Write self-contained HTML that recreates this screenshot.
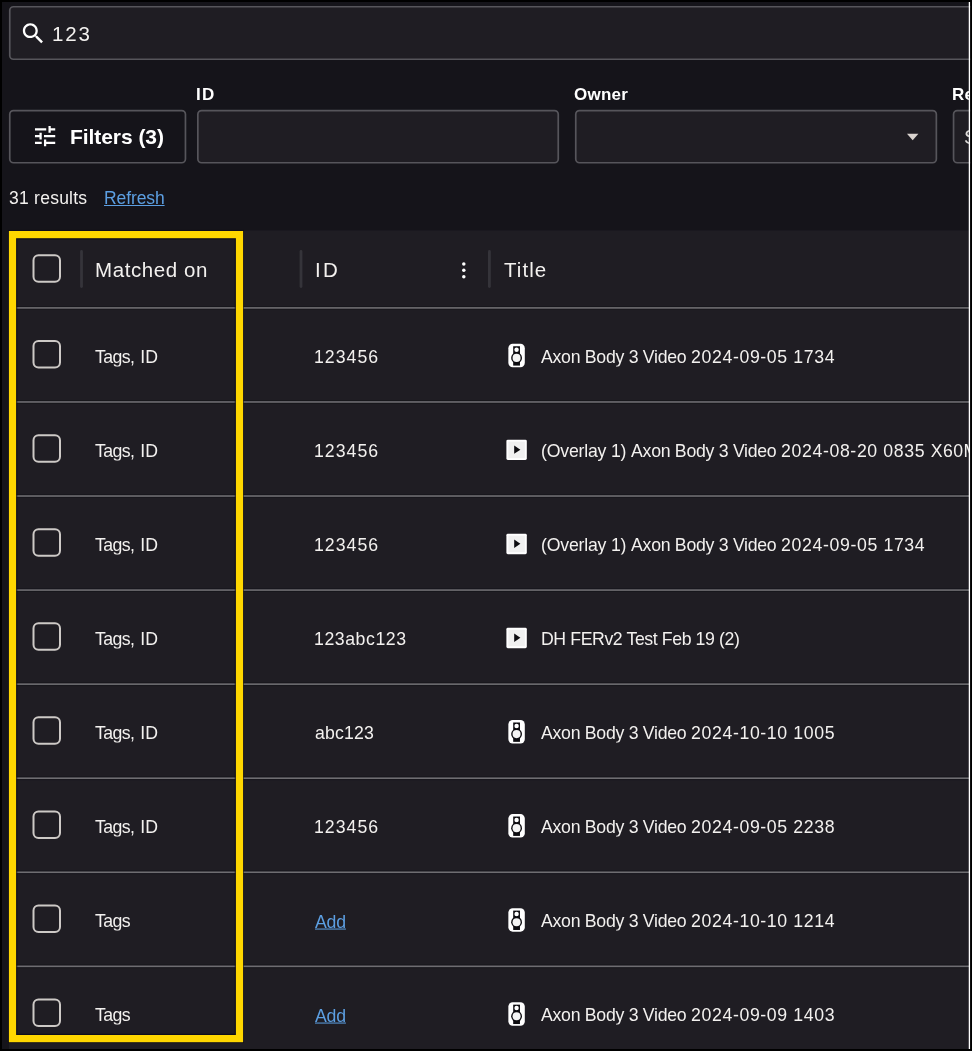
<!DOCTYPE html>
<html lang="en">
<head>
<meta charset="utf-8">
<title>Evidence search</title>
<style>
*{box-sizing:border-box;margin:0;padding:0}
html,body{width:972px;height:1051px;overflow:hidden;background:#000}
body{position:relative;font-family:"Liberation Sans",sans-serif;color:#f3f1ef}
#page{position:absolute;left:2px;top:2px;width:967px;height:1047px;background:#15141a}
#art{position:absolute;left:0;top:0}
#text{position:absolute;left:0;top:0;width:969px;height:1049px;overflow:hidden}
.t{position:absolute;white-space:nowrap;line-height:1;will-change:transform}
.c{transform:translateY(0.55px)}
a{color:#5c9fe2;text-decoration:underline;text-decoration-thickness:1.4px;text-underline-offset:1px}
</style>
</head>
<body>
<div id="page"></div>
<svg id="art" width="972" height="1051" viewBox="0 0 972 1051">
<rect x="9.75" y="6.75" width="999.40" height="52.50" rx="3.75" fill="#1f1d23" stroke="#56555b" stroke-width="1.7"/>
<path transform="translate(19.4 19.7) scale(1.15)" fill="#fff" d="M15.5 14h-.79l-.28-.27C15.41 12.59 16 11.11 16 9.5 16 5.91 13.09 3 9.5 3S3 5.91 3 9.5 5.91 16 9.5 16c1.61 0 3.09-.59 4.23-1.57l.27.28v.79l5 4.99L20.49 19l-4.99-5zm-6 0C7.01 14 5 11.99 5 9.5S7.01 5 9.5 5 14 7.01 14 9.5 11.99 14 9.5 14z"/>
<rect x="9.75" y="110.55" width="175.70" height="52.20" rx="3.75" fill="#15141a" stroke="#56555b" stroke-width="1.7"/>
<path transform="translate(31.6 122.6) scale(1.125)" fill="#fff" d="M3 17v2h6v-2H3zM3 5v2h10V5H3zm10 16v-2h8v-2h-8v-2h-2v6h2zM7 9v2H3v2h4v2h2V9H7zm14 4v-2H11v2h10zm-6-4h2V7h4V5h-4V3h-2v6z"/>
<rect x="197.85" y="110.55" width="360.40" height="52.20" rx="3.75" fill="#1f1d23" stroke="#56555b" stroke-width="1.7"/>
<rect x="575.75" y="110.55" width="360.60" height="52.20" rx="3.75" fill="#1f1d23" stroke="#56555b" stroke-width="1.7"/>
<path d="M907 133.8h11.4l-5.7 6.4z" fill="#d9d3cf"/>
<rect x="953.55" y="110.55" width="105.60" height="52.20" rx="3.75" fill="#1f1d23" stroke="#56555b" stroke-width="1.7"/>
<rect x="9" y="230.4" width="960" height="818.6" fill="#1f1d23"/>
<rect x="33.50" y="255.20" width="26.5" height="26.5" rx="5" fill="none" stroke="#cdc9c6" stroke-width="2"/>
<rect x="80.10" y="250" width="2.8" height="38" rx="1.4" fill="#35343a"/>
<rect x="299.60" y="250" width="2.8" height="38" rx="1.4" fill="#35343a"/>
<rect x="488.00" y="250" width="2.8" height="38" rx="1.4" fill="#35343a"/>
<circle cx="463.8" cy="263.9" r="1.75" fill="#fff"/>
<circle cx="463.8" cy="270.3" r="1.75" fill="#fff"/>
<circle cx="463.8" cy="276.7" r="1.75" fill="#fff"/>
<rect x="9" y="306.00" width="960" height="3.8" fill="#17161b" opacity="0.8"/>
<rect x="9" y="307.10" width="960" height="1.6" fill="#6e6d71"/>
<rect x="33.50" y="341.10" width="26.5" height="26.5" rx="5" fill="none" stroke="#cdc9c6" stroke-width="2"/>
<g transform="translate(508.35 343.80) scale(0.968 0.978)"><rect width="17" height="24" rx="4.5" fill="#fff"/><rect x="5" y="2.5" width="7" height="19.8" fill="#0d0c10"/><circle cx="8.5" cy="6" r="2.3" fill="#fff"/><circle cx="8.5" cy="14.4" r="5.6" fill="#0d0c10"/><circle cx="8.5" cy="14.4" r="4.15" fill="#f4f4f4"/></g>
<rect x="9" y="400.06" width="960" height="3.8" fill="#17161b" opacity="0.8"/>
<rect x="9" y="401.16" width="960" height="1.6" fill="#6e6d71"/>
<rect x="33.50" y="435.16" width="26.5" height="26.5" rx="5" fill="none" stroke="#cdc9c6" stroke-width="2"/>
<g transform="translate(506.40 439.66) scale(0.972)"><rect width="21" height="21" rx="1.5" fill="#fff"/><rect x="2" y="2" width="17" height="17" fill="#f0f0f0"/><path d="M8 6v8.6l6.4-4.3z" fill="#0d0c10"/></g>
<rect x="9" y="494.12" width="960" height="3.8" fill="#17161b" opacity="0.8"/>
<rect x="9" y="495.22" width="960" height="1.6" fill="#6e6d71"/>
<rect x="33.50" y="529.22" width="26.5" height="26.5" rx="5" fill="none" stroke="#cdc9c6" stroke-width="2"/>
<g transform="translate(506.40 533.72) scale(0.972)"><rect width="21" height="21" rx="1.5" fill="#fff"/><rect x="2" y="2" width="17" height="17" fill="#f0f0f0"/><path d="M8 6v8.6l6.4-4.3z" fill="#0d0c10"/></g>
<rect x="9" y="588.18" width="960" height="3.8" fill="#17161b" opacity="0.8"/>
<rect x="9" y="589.28" width="960" height="1.6" fill="#6e6d71"/>
<rect x="33.50" y="623.28" width="26.5" height="26.5" rx="5" fill="none" stroke="#cdc9c6" stroke-width="2"/>
<g transform="translate(506.40 627.78) scale(0.972)"><rect width="21" height="21" rx="1.5" fill="#fff"/><rect x="2" y="2" width="17" height="17" fill="#f0f0f0"/><path d="M8 6v8.6l6.4-4.3z" fill="#0d0c10"/></g>
<rect x="9" y="682.24" width="960" height="3.8" fill="#17161b" opacity="0.8"/>
<rect x="9" y="683.34" width="960" height="1.6" fill="#6e6d71"/>
<rect x="33.50" y="717.34" width="26.5" height="26.5" rx="5" fill="none" stroke="#cdc9c6" stroke-width="2"/>
<g transform="translate(508.35 720.04) scale(0.968 0.978)"><rect width="17" height="24" rx="4.5" fill="#fff"/><rect x="5" y="2.5" width="7" height="19.8" fill="#0d0c10"/><circle cx="8.5" cy="6" r="2.3" fill="#fff"/><circle cx="8.5" cy="14.4" r="5.6" fill="#0d0c10"/><circle cx="8.5" cy="14.4" r="4.15" fill="#f4f4f4"/></g>
<rect x="9" y="776.30" width="960" height="3.8" fill="#17161b" opacity="0.8"/>
<rect x="9" y="777.40" width="960" height="1.6" fill="#6e6d71"/>
<rect x="33.50" y="811.40" width="26.5" height="26.5" rx="5" fill="none" stroke="#cdc9c6" stroke-width="2"/>
<g transform="translate(508.35 814.10) scale(0.968 0.978)"><rect width="17" height="24" rx="4.5" fill="#fff"/><rect x="5" y="2.5" width="7" height="19.8" fill="#0d0c10"/><circle cx="8.5" cy="6" r="2.3" fill="#fff"/><circle cx="8.5" cy="14.4" r="5.6" fill="#0d0c10"/><circle cx="8.5" cy="14.4" r="4.15" fill="#f4f4f4"/></g>
<rect x="9" y="870.36" width="960" height="3.8" fill="#17161b" opacity="0.8"/>
<rect x="9" y="871.46" width="960" height="1.6" fill="#6e6d71"/>
<rect x="33.50" y="905.46" width="26.5" height="26.5" rx="5" fill="none" stroke="#cdc9c6" stroke-width="2"/>
<g transform="translate(508.35 908.16) scale(0.968 0.978)"><rect width="17" height="24" rx="4.5" fill="#fff"/><rect x="5" y="2.5" width="7" height="19.8" fill="#0d0c10"/><circle cx="8.5" cy="6" r="2.3" fill="#fff"/><circle cx="8.5" cy="14.4" r="5.6" fill="#0d0c10"/><circle cx="8.5" cy="14.4" r="4.15" fill="#f4f4f4"/></g>
<rect x="9" y="964.42" width="960" height="3.8" fill="#17161b" opacity="0.8"/>
<rect x="9" y="965.52" width="960" height="1.6" fill="#6e6d71"/>
<rect x="33.50" y="999.52" width="26.5" height="26.5" rx="5" fill="none" stroke="#cdc9c6" stroke-width="2"/>
<g transform="translate(508.35 1002.22) scale(0.968 0.978)"><rect width="17" height="24" rx="4.5" fill="#fff"/><rect x="5" y="2.5" width="7" height="19.8" fill="#0d0c10"/><circle cx="8.5" cy="6" r="2.3" fill="#fff"/><circle cx="8.5" cy="14.4" r="5.6" fill="#0d0c10"/><circle cx="8.5" cy="14.4" r="4.15" fill="#f4f4f4"/></g>
<rect x="8.5" y="230.4" width="235" height="812.2" fill="none" stroke="#0a0918" stroke-width="0.9" opacity="0.7"/>
<rect x="16.6" y="238.7" width="218.8" height="795.8" fill="none" stroke="#0a0918" stroke-width="1.4" opacity="0.75"/>
<rect x="12.5" y="234.6" width="227" height="804" fill="none" stroke="#ffd700" stroke-width="7.2"/>
<rect x="968.75" y="2" width="1.5" height="1047" fill="#fff"/>
<rect x="970.25" y="0" width="2" height="1051" fill="#000"/>
</svg>
<div id="text">
<div class="t c" style="left:52.2px;top:23.3px;font-size:20.5px;letter-spacing:1.9px">123</div>
<div class="t" style="left:196.3px;top:85.5px;font-size:17px;font-weight:bold;letter-spacing:1.4px;color:#fff">ID</div>
<div class="t" style="left:574.2px;top:85.5px;font-size:17px;font-weight:bold;letter-spacing:0.25px;color:#fff">Owner</div>
<div class="t" style="left:952.3px;top:85.5px;font-size:17px;font-weight:bold;letter-spacing:0.1px;color:#fff">Re</div>
<div class="t" style="left:69.9px;top:126.4px;font-size:21px;font-weight:bold;letter-spacing:-0.06px;color:#fff">Filters (3)</div>
<div class="t" style="left:963.5px;top:127px;font-size:20px;color:#dddbd9">S</div>
<div class="t" style="left:9px;top:189.6px;font-size:17.5px;letter-spacing:0.25px">31 results</div>
<div class="t" style="left:103.7px;top:189.6px;font-size:17.5px;letter-spacing:-0.1px"><a>Refresh</a></div>
<div class="t" style="left:95.0px;top:260px;font-size:20.5px;letter-spacing:0.6px">Matched on</div>
<div class="t" style="left:314.5px;top:260px;font-size:20.5px;letter-spacing:2.2px">ID</div>
<div class="t" style="left:504px;top:260px;font-size:20.5px;letter-spacing:1.05px">Title</div>
<div class="t c" style="left:95.2px;top:347.7px;font-size:17.7px;"><span style="letter-spacing:-0.592px">Tags</span><span style="letter-spacing:0.187px">, ID</span></div>
<div class="t c" style="left:314.0px;top:347.7px;font-size:17.7px;"><span style="letter-spacing:1.024px">123456</span></div>
<div class="t c" style="left:541px;top:347.7px;font-size:17.7px;"><span style="letter-spacing:-0.281px">Axon Body 3 Video </span><span style="letter-spacing:0.636px">2024-09-05 1734</span></div>
<div class="t c" style="left:95.2px;top:441.8px;font-size:17.7px;"><span style="letter-spacing:-0.592px">Tags</span><span style="letter-spacing:0.187px">, ID</span></div>
<div class="t c" style="left:314.0px;top:441.8px;font-size:17.7px;"><span style="letter-spacing:1.024px">123456</span></div>
<div class="t c" style="left:541px;top:441.8px;font-size:17.7px;"><span style="letter-spacing:-0.196px">(Overlay 1) </span><span style="letter-spacing:-0.281px">Axon Body 3 Video </span><span style="letter-spacing:0.632px">2024-08-20 0835 </span><span style="letter-spacing:0.396px">X60M</span></div>
<div class="t c" style="left:95.2px;top:535.8px;font-size:17.7px;"><span style="letter-spacing:-0.592px">Tags</span><span style="letter-spacing:0.187px">, ID</span></div>
<div class="t c" style="left:314.0px;top:535.8px;font-size:17.7px;"><span style="letter-spacing:1.024px">123456</span></div>
<div class="t c" style="left:541px;top:535.8px;font-size:17.7px;"><span style="letter-spacing:-0.196px">(Overlay 1) </span><span style="letter-spacing:-0.281px">Axon Body 3 Video </span><span style="letter-spacing:0.636px">2024-09-05 1734</span></div>
<div class="t c" style="left:95.2px;top:629.9px;font-size:17.7px;"><span style="letter-spacing:-0.592px">Tags</span><span style="letter-spacing:0.187px">, ID</span></div>
<div class="t c" style="left:313.8px;top:629.9px;font-size:17.7px;"><span style="letter-spacing:0.566px">123abc123</span></div>
<div class="t c" style="left:541px;top:629.9px;font-size:17.7px;"><span style="letter-spacing:-0.403px">DH FERv2 Test Feb 19 (2)</span></div>
<div class="t c" style="left:95.2px;top:723.9px;font-size:17.7px;"><span style="letter-spacing:-0.592px">Tags</span><span style="letter-spacing:0.187px">, ID</span></div>
<div class="t c" style="left:314.5px;top:723.9px;font-size:17.7px;"><span style="letter-spacing:0.164px">abc123</span></div>
<div class="t c" style="left:541px;top:723.9px;font-size:17.7px;"><span style="letter-spacing:-0.281px">Axon Body 3 Video </span><span style="letter-spacing:0.636px">2024-10-10 1005</span></div>
<div class="t c" style="left:95.2px;top:818.0px;font-size:17.7px;"><span style="letter-spacing:-0.592px">Tags</span><span style="letter-spacing:0.187px">, ID</span></div>
<div class="t c" style="left:314.0px;top:818.0px;font-size:17.7px;"><span style="letter-spacing:1.024px">123456</span></div>
<div class="t c" style="left:541px;top:818.0px;font-size:17.7px;"><span style="letter-spacing:-0.281px">Axon Body 3 Video </span><span style="letter-spacing:0.636px">2024-09-05 2238</span></div>
<div class="t c" style="left:95.2px;top:912.1px;font-size:17.7px;"><span style="letter-spacing:-0.592px">Tags</span></div>
<div class="t c" style="left:315.3px;top:913.1px;font-size:17.7px;"><a><span style="letter-spacing:-0.182px">Add</span></a></div>
<div class="t c" style="left:541px;top:912.1px;font-size:17.7px;"><span style="letter-spacing:-0.281px">Axon Body 3 Video </span><span style="letter-spacing:0.636px">2024-10-10 1214</span></div>
<div class="t c" style="left:95.2px;top:1006.1px;font-size:17.7px;"><span style="letter-spacing:-0.592px">Tags</span></div>
<div class="t c" style="left:315.3px;top:1007.1px;font-size:17.7px;"><a><span style="letter-spacing:-0.182px">Add</span></a></div>
<div class="t c" style="left:541px;top:1006.1px;font-size:17.7px;"><span style="letter-spacing:-0.281px">Axon Body 3 Video </span><span style="letter-spacing:0.636px">2024-09-09 1403</span></div>
</div>
</body>
</html>
